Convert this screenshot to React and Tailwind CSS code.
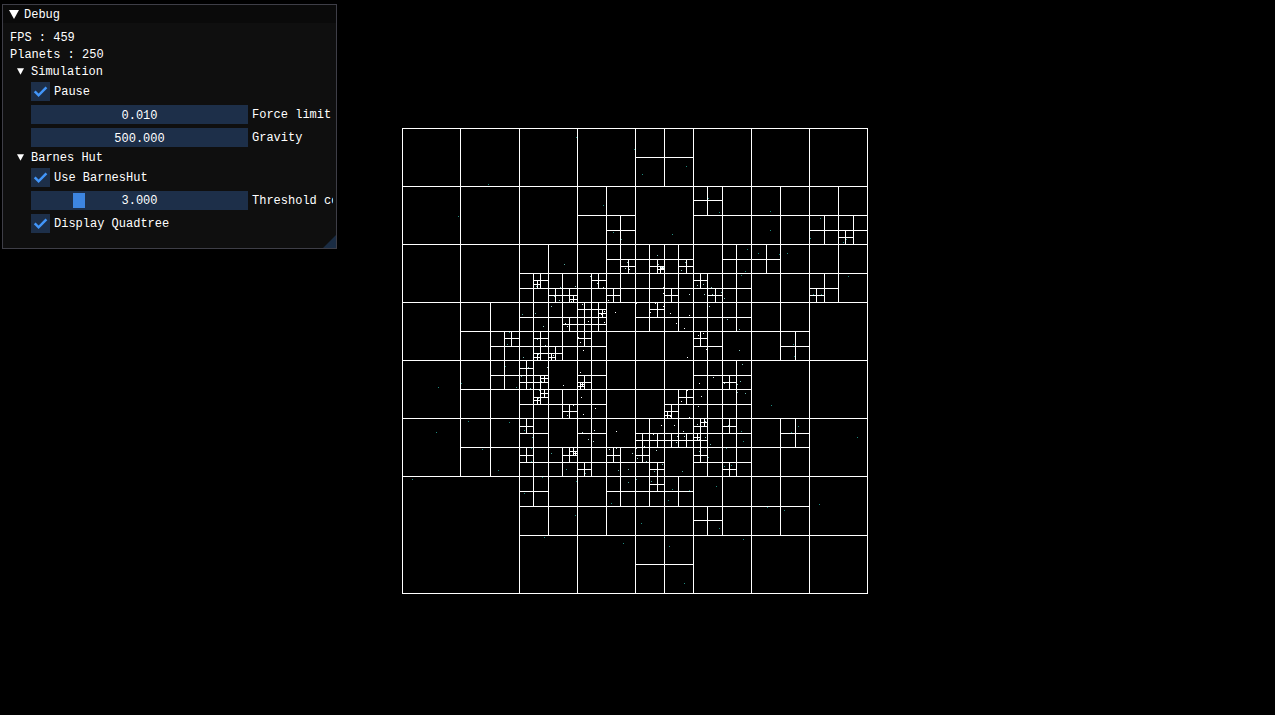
import { useState } from "react";

// Grid geometry: the root square is divided into 64 units of UNIT pixels.
const ORIGIN_X = 402.36;
const ORIGIN_Y = 127.83;
const UNIT = 7.2635;
const px = (u) => Math.round(ORIGIN_X + u * UNIT);
const py = (u) => Math.round(ORIGIN_Y + u * UNIT);

// Divided quadtree nodes as [row, columns], grouped by node size in units.
const DIVIDED = [
  {
    size: 8,
    rows: [
      [0, [4]],
      [1, [3, 5, 6, 7]],
      [2, [2, 3, 4, 5, 6, 7]],
      [3, [1, 2, 3, 4, 5, 6]],
      [4, [1, 2, 3, 4, 5]],
      [5, [1, 2, 3, 4, 5, 6]],
      [6, [2, 3, 4, 5, 6]],
      [7, [4]],
    ],
  },
  {
    size: 4,
    rows: [
      [2, [10]],
      [3, [7, 14, 15]],
      [4, [7, 8, 9, 11, 12]],
      [5, [4, 5, 6, 7, 8, 9, 10, 11, 14]],
      [6, [4, 5, 6, 8, 9, 10, 11]],
      [7, [3, 4, 5, 6, 10, 13]],
      [8, [3, 4, 6, 10, 11]],
      [9, [4, 5, 6, 9, 10, 11]],
      [10, [4, 6, 8, 9, 10, 11, 13]],
      [11, [4, 5, 6, 7, 8, 10, 11]],
      [12, [4, 7, 8, 9]],
      [13, [10]],
    ],
  },
  {
    size: 2,
    rows: [
      [7, [30]],
      [9, [15, 17, 19]],
      [10, [9, 13, 20]],
      [11, [10, 11, 14, 18, 21, 28]],
      [12, [12, 13, 17]],
      [13, [11, 12, 13]],
      [14, [7, 9, 12, 20]],
      [15, [9, 10]],
      [16, [8]],
      [17, [8, 9, 12, 22]],
      [18, [9, 19]],
      [19, [11, 18]],
      [20, [8, 20, 22]],
      [21, [16, 17, 18, 19, 20]],
      [22, [8, 11, 14, 16, 20]],
      [23, [12, 17, 22]],
      [24, [17]],
    ],
  },
  {
    size: 1,
    rows: [
      [19, [35]],
      [21, [18]],
      [23, [23]],
      [25, [27]],
      [31, [18, 20]],
      [34, [19]],
      [35, [24]],
      [36, [19]],
      [37, [18]],
      [39, [36]],
      [40, [41]],
      [42, [40]],
      [44, [23]],
    ],
  },
  {
    size: 0.5,
    rows: [
      [38, [71]],
      [70, [49]],
      [89, [47]],
    ],
  },
];

const hLine = (x1, x2, y) => `M${px(x1)} ${py(y) + 0.5}H${px(x2) + 1}`;
const vLine = (x, y1, y2) => `M${px(x) + 0.5} ${py(y1)}V${py(y2) + 1}`;

function buildGrid() {
  const parts = [];
  for (let i = 0; i <= 8; i++) {
    // The bottom-left node (16 units) is a leaf.
    parts.push(hLine(i === 7 ? 16 : 0, 64, i * 8));
    parts.push(vLine(i * 8, 0, i === 1 ? 48 : 64));
  }
  for (const { size, rows } of DIVIDED) {
    for (const [row, cols] of rows) {
      for (const col of cols) {
        const x = col * size;
        const y = row * size;
        parts.push(hLine(x, x + size, y + size / 2));
        parts.push(vLine(x + size / 2, y, y + size));
      }
    }
  }
  return parts.join("");
}

const GRID = buildGrid();

const PLANETS = [
  [488,184],[458,216],[576,137],[634,149],[603,205],[613,232],[621,239],
  [642,174],[686,166],[672,234],[708,198],[719,212],[770,211],[770,230],
  [820,218],[810,238],[846,239],[843,242],[758,253],[779,254],[787,253],
  [848,276],[813,294],[821,294],[564,264],[627,262],[625,268],[629,269],
  [590,276],[537,282],[536,286],[560,287],[575,286],[597,283],[603,287],
  [554,296],[559,300],[571,301],[608,300],[613,292],[551,306],[522,314],
  [535,313],[562,310],[582,304],[604,311],[601,314],[615,312],[588,321],
  [604,322],[543,326],[565,323],[567,326],[537,339],[545,345],[578,337],
  [580,342],[583,350],[523,357],[553,355],[538,354],[657,255],[658,264],
  [661,267],[663,267],[685,262],[681,270],[747,249],[745,271],[741,275],
  [697,285],[703,284],[711,287],[663,287],[663,293],[689,294],[704,294],
  [712,294],[721,292],[724,298],[636,303],[655,303],[663,306],[650,312],
  [670,313],[709,306],[689,315],[676,323],[684,328],[727,319],[739,329],
  [703,333],[698,335],[706,349],[716,346],[739,350],[687,357],[509,332],
  [507,344],[505,366],[461,383],[516,387],[468,421],[509,422],[482,449],
  [498,470],[438,387],[436,432],[412,479],[528,367],[521,376],[530,388],
  [547,367],[563,385],[580,372],[581,397],[595,408],[583,414],[573,405],
  [567,415],[524,430],[532,437],[594,430],[582,432],[588,439],[593,441],
  [616,431],[551,453],[531,448],[531,461],[609,449],[616,448],[632,453],
  [566,469],[585,473],[618,470],[628,469],[541,381],[539,390],[543,393],
  [538,398],[579,386],[742,364],[713,377],[699,383],[724,383],[740,381],
  [737,384],[737,392],[745,393],[701,396],[687,390],[681,401],[698,406],
  [689,417],[670,416],[661,425],[674,425],[683,431],[697,424],[705,421],
  [728,425],[741,431],[653,434],[677,436],[684,436],[676,442],[705,437],
  [699,439],[710,444],[743,441],[726,448],[636,448],[644,446],[656,450],
  [637,458],[646,461],[699,451],[708,457],[662,464],[654,471],[682,471],
  [707,469],[724,466],[731,465],[542,477],[576,481],[533,484],[524,493],
  [628,482],[636,479],[651,481],[658,484],[672,489],[689,490],[668,500],
  [716,486],[611,503],[575,515],[641,523],[693,508],[719,528],[544,537],
  [623,543],[669,546],[684,583],[743,539],[793,344],[794,356],[771,405],
  [791,432],[798,426],[857,437],[780,464],[767,507],[784,510],[819,504],
];

// Planets fade from white near the core to teal at the rim.
function planetColor(x, y) {
  const d = Math.hypot(x - 635, y - 361);
  const t = Math.min(1, Math.max(0, (d - 70) / 65));
  const mix = (a, b) => Math.round(a + (b - a) * t);
  return `rgb(${mix(255, 30)},${mix(255, 138)},${mix(255, 126)})`;
}

function Quadtree({ showGrid }) {
  return (
    <svg
      width="466"
      height="466"
      viewBox="402 128 466 466"
      shapeRendering="crispEdges"
      role="img"
      aria-label="Planets"
      className="shrink-0"
    >
      {PLANETS.map(([x, y]) => (
        <rect key={`${x}-${y}`} x={x} y={y} width="1" height="1" fill={planetColor(x, y)} />
      ))}
      {showGrid && <path d={GRID} stroke="#fff" strokeWidth="1" fill="none" />}
    </svg>
  );
}

function Check({ label, checked, onChange }) {
  return (
    <label className="flex h-[19px] items-center gap-1">
      <span className="relative size-[19px] shrink-0">
        <input
          type="checkbox"
          checked={checked}
          onChange={(e) => onChange(e.target.checked)}
          className="block size-[19px] appearance-none bg-[#1d2f49]"
        />
        {checked && (
          <svg viewBox="0 0 19 19" className="pointer-events-none absolute inset-0 size-[19px]">
            <path d="M3.7 9.3 7.6 13.3 15.4 5.4" fill="none" stroke="#4296fa" strokeWidth="2.5" />
          </svg>
        )}
      </span>
      <span className="pt-0.5">{label}</span>
    </label>
  );
}

function DragField({ id, label, initial }) {
  const [value, setValue] = useState(initial);
  return (
    <div className="flex h-[19px] items-center gap-1">
      <input
        id={id}
        type="text"
        value={value}
        onChange={(e) => setValue(e.target.value)}
        className="h-[19px] w-[217px] shrink-0 bg-[#1d2f49] pt-0.5 text-center outline-none"
      />
      <label htmlFor={id} className="pt-0.5 whitespace-nowrap">{label}</label>
    </div>
  );
}

function SliderField({ id, label, initial, max }) {
  const [value, setValue] = useState(initial);
  return (
    <div className="flex h-[19px] items-center gap-1">
      <div className="relative h-[19px] w-[217px] shrink-0">
        <input
          id={id}
          type="range"
          min="0"
          max={max}
          step="0.001"
          value={value}
          onChange={(e) => setValue(Number(e.target.value))}
          className="block h-[19px] w-full appearance-none bg-[#1d2f49] px-0.5 outline-none [&::-webkit-slider-thumb]:h-[15px] [&::-webkit-slider-thumb]:w-3 [&::-webkit-slider-thumb]:appearance-none [&::-webkit-slider-thumb]:bg-[#3d85e0]"
        />
        <output
          htmlFor={id}
          className="pointer-events-none absolute inset-0 pt-1 text-center"
        >
          {value.toFixed(3)}
        </output>
      </div>
      <label htmlFor={id} className="pt-0.5 whitespace-nowrap">{label}</label>
    </div>
  );
}

function Arrow({ open, className }) {
  return (
    <svg viewBox="0 0 10 9" className={className}>
      <path d={open ? "M0 0H10L5 9Z" : "M1 0V9L9 4.5Z"} fill="#fff" />
    </svg>
  );
}

function TreeNode({ title, children }) {
  const [open, setOpen] = useState(true);
  return (
    <section className="flex flex-col gap-1">
      <button
        type="button"
        aria-expanded={open}
        onClick={() => setOpen(!open)}
        className="flex h-[13px] items-center gap-[7px] pl-[7px] text-left"
      >
        <Arrow open={open} className="h-[7px] w-[7px]" />
        <span className="pt-0.5">{title}</span>
      </button>
      {open && <div className="flex flex-col gap-1 pl-[21px]">{children}</div>}
    </section>
  );
}

export default function App() {
  const [open, setOpen] = useState(true);
  const [paused, setPaused] = useState(true);
  const [barnesHut, setBarnesHut] = useState(true);
  const [showGrid, setShowGrid] = useState(true);

  return (
    <div className="relative min-h-screen bg-black font-['Liberation_Mono',monospace] text-[12px] leading-[13px] text-white">
      <main className="flex min-h-screen items-center justify-center pt-[7px] pr-[5px]">
        <Quadtree showGrid={showGrid} />
      </main>

      <aside className="absolute top-1 left-0.5 w-[335px] border border-[#3e3e47] bg-[#0f0f0f]">
        <button
          type="button"
          aria-expanded={open}
          onClick={() => setOpen(!open)}
          className="flex h-[18px] w-full items-center gap-[5px] bg-[#0a0a0a] pl-1.5 text-left"
        >
          <Arrow open={open} className="h-[9px] w-[10px]" />
          <span className="pt-0.5">Debug</span>
        </button>
        {open && (
          <div className="mr-[3px] flex flex-col gap-1 overflow-hidden pt-2 pb-[15px] pl-[7px]">
            <p className="h-[13px] pt-px">FPS : 459</p>
            <p className="h-[13px] pt-px">Planets : 250</p>
            <TreeNode title="Simulation">
              <Check label="Pause" checked={paused} onChange={setPaused} />
              <DragField id="force-limit" label="Force limit" initial="0.010" />
              <DragField id="gravity" label="Gravity" initial="500.000" />
            </TreeNode>
            <TreeNode title="Barnes Hut">
              <Check label="Use BarnesHut" checked={barnesHut} onChange={setBarnesHut} />
              <SliderField id="threshold" label="Threshold coef" initial={3} max={15} />
              <Check label="Display Quadtree" checked={showGrid} onChange={setShowGrid} />
            </TreeNode>
          </div>
        )}
        <svg viewBox="0 0 13 13" className="absolute right-0 bottom-0 size-[13px]">
          <path d="M13 0V13H0Z" fill="#1a2c43" />
        </svg>
      </aside>
    </div>
  );
}
